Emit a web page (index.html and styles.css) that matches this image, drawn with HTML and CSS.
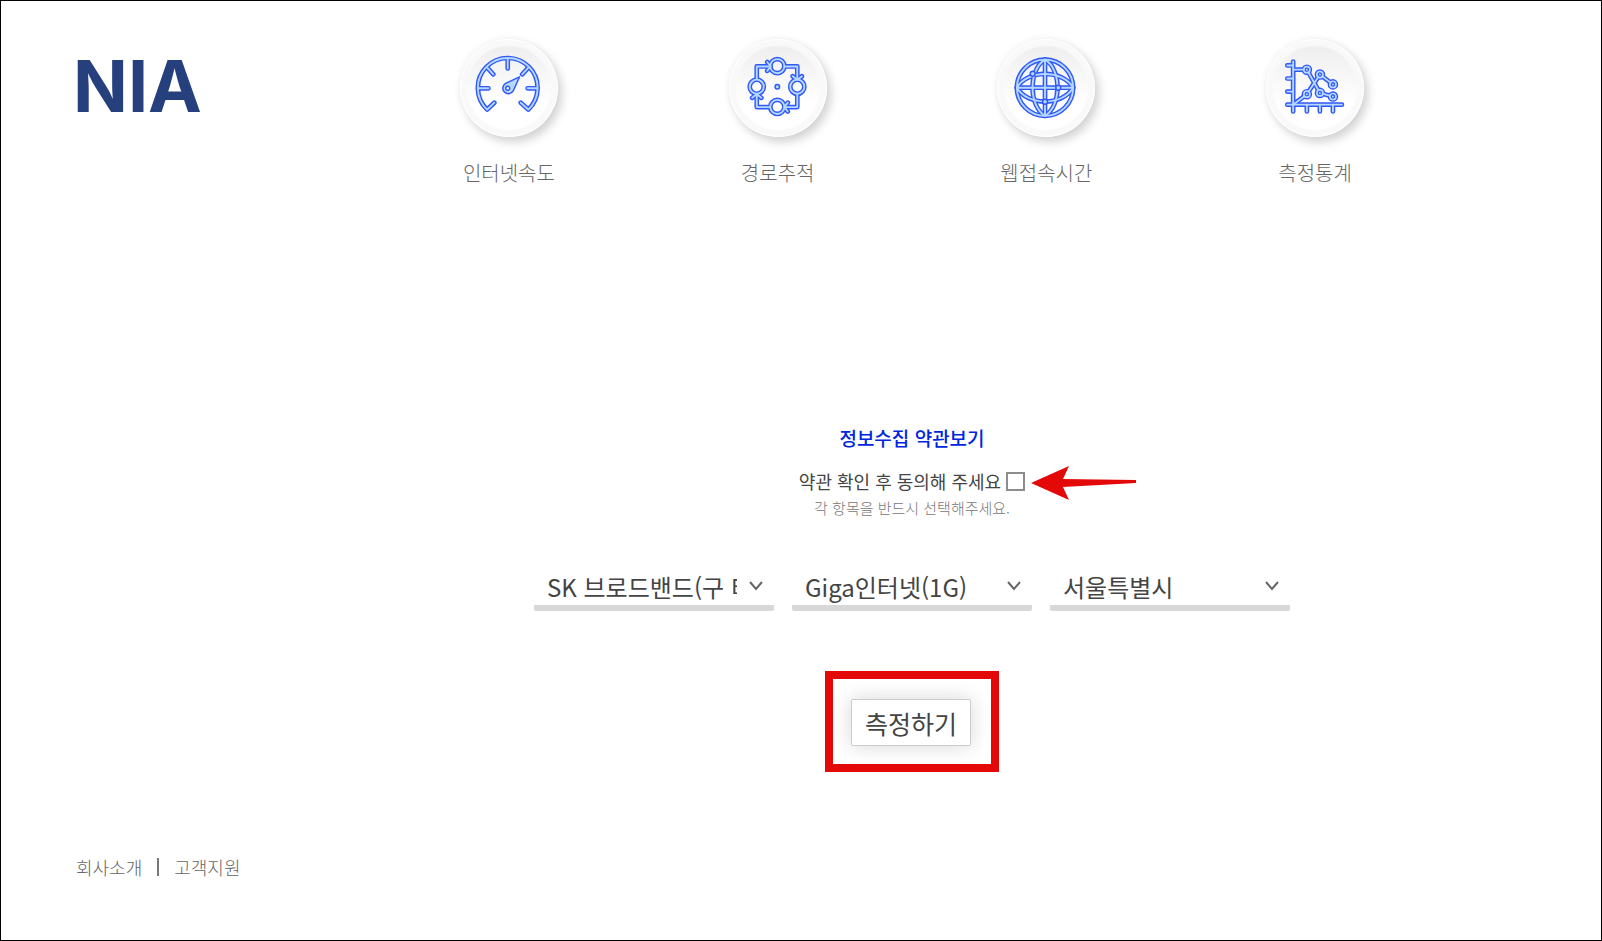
FILE: index.html
```html
<!DOCTYPE html>
<html lang="ko">
<head>
    <meta charset="UTF-8">
    <meta name="viewport" content="width=device-width, initial-scale=1.0">
    <title>NIA</title>
    <link rel="stylesheet" href="styles.css">
</head>
<body>
    <header class="header">
        <a class="logo" href="#">NIA</a>
        <nav class="menu">
            <a class="menu-item" href="#">
                <svg class="menu-icon" viewBox="0 0 98 98" aria-hidden="true">
                    <defs>
                        <g id="speed">
                            <path d="M34 64L26.7 71A30.5 30.5 0 1 1 68.7 71L61 64"/>
                            <path d="M18 49.3H28M77.5 49.3H68M47.7 19.5V29M27 28.5L33 35M68.5 28.5L62.5 35"/>
                        </g>
                    </defs>
                    <use href="#speed" class="edge"/>
                    <use href="#speed" class="core"/>
                    <path class="thin" d="M59.7 37.7L45.5 44.2A5.7 5.7 0 1 0 53.3 52Z"/>
                    <circle class="thin hole" cx="47.7" cy="49.3" r="2"/>
                </svg>
                <span>인터넷속도</span>
            </a>
            <a class="menu-item" href="#">
                <svg class="menu-icon" viewBox="0 0 98 98" aria-hidden="true">
                    <defs>
                        <g id="route">
                            <path d="M27.3 40V27H41M56 27H68.7V40M68.7 56V68.5H56M41 68.5H27.3V56"/>
                            <path d="M38 22.5L41.5 27L38 31.5M64 37L68.7 40.5L73.4 37M59 64L55.5 68.5L59 73M22.6 59L27.3 55.5L32 59"/>
                            <circle cx="48.3" cy="26.7" r="7.2"/>
                            <circle cx="68.7" cy="47.7" r="7.2"/>
                            <circle cx="48.3" cy="68.3" r="7.2"/>
                            <circle cx="27.3" cy="47.7" r="7.2"/>
                        </g>
                    </defs>
                    <use href="#route" class="edge"/>
                    <use href="#route" class="core"/>
                    <circle class="thin" cx="48.3" cy="47.7" r="2.3"/>
                </svg>
                <span>경로추적</span>
            </a>
            <a class="menu-item" href="#">
                <svg class="menu-icon" viewBox="0 0 98 98" aria-hidden="true">
                    <defs>
                        <g id="globe">
                            <circle cx="48" cy="48.7" r="28.7"/>
                            <path d="M48 20V77.4M19.3 48.7H76.7"/>
                            <path d="M48 20C31 30 31 67 48 77.4C65 67 65 30 48 20"/>
                            <path d="M19.3 48.7C30 30 66 30 76.7 48.7C66 67.4 30 67.4 19.3 48.7"/>
                        </g>
                    </defs>
                    <use href="#globe" class="edge"/>
                    <use href="#globe" class="core"/>
                    <circle class="thin" cx="35.4" cy="34.5" r="2.5"/>
                    <circle class="thin" cx="61.5" cy="48.7" r="2.5"/>
                    <circle class="thin" cx="48" cy="63" r="2.5"/>
                </svg>
                <span>웹접속시간</span>
            </a>
            <a class="menu-item" href="#">
                <svg class="menu-icon" viewBox="0 0 98 98" aria-hidden="true">
                    <defs>
                        <g id="stats">
                            <path d="M26.7 22V73M20.7 66H76.5M20.7 26H26.7M20.7 39.3H26.7M20.7 52.7H26.7M40.7 66V73M54 66V73M67.3 66V73"/>
                            <path d="M26.7 30.3H40.7L54 54L67.3 57.7M26.7 66L40.7 55.3L54 35.3L67.3 45.3"/>
                            <circle cx="40.7" cy="30.3" r="3"/>
                            <circle cx="54" cy="35.3" r="3"/>
                            <circle cx="67.3" cy="45.3" r="3"/>
                            <circle cx="40.7" cy="55.3" r="3"/>
                            <circle cx="54" cy="54" r="3"/>
                            <circle cx="67.3" cy="57.7" r="3"/>
                        </g>
                    </defs>
                    <use href="#stats" class="edge"/>
                    <use href="#stats" class="core"/>
                    <g class="dots">
                        <circle cx="40.7" cy="30.3" r="1.6"/>
                        <circle cx="54" cy="35.3" r="1.6"/>
                        <circle cx="67.3" cy="45.3" r="1.6"/>
                        <circle cx="40.7" cy="55.3" r="1.6"/>
                        <circle cx="54" cy="54" r="1.6"/>
                        <circle cx="67.3" cy="57.7" r="1.6"/>
                    </g>
                </svg>
                <span>측정통계</span>
            </a>
        </nav>
    </header>

    <main class="content">
        <a class="terms" href="#">정보수집 약관보기</a>
        <div class="agree">
            <label for="agree">약관 확인 후 동의해 주세요</label>
            <input type="checkbox" id="agree">
            <svg class="arrow" viewBox="0 0 105 34" aria-hidden="true">
                <path d="M0 17L38 0L32 13L105 14V17L32 21L38 34Z"/>
            </svg>
        </div>
        <p class="hint">각 항목을 반드시 선택해주세요.</p>
        <form class="measure">
            <div class="selects">
                <select aria-label="통신사">
                    <option>SK 브로드밴드(구 티브로드)</option>
                </select>
                <select aria-label="상품">
                    <option>Giga인터넷(1G)</option>
                </select>
                <select aria-label="지역">
                    <option>서울특별시</option>
                </select>
            </div>
            <div class="highlight">
                <button type="button">측정하기</button>
            </div>
        </form>
    </main>

    <footer class="footer">
        <a href="#">회사소개</a>
        <span class="bar"></span>
        <a href="#">고객지원</a>
    </footer>
</body>
</html>
```

FILE: styles.css
```css
* {
    box-sizing: border-box;
}

body {
    font-family: "Noto Sans CJK KR", sans-serif;
    font-weight: 400;
    margin: 0;
    min-height: 100vh;
    display: flex;
    flex-direction: column;
    border: 1px solid #000;
    background-color: #fff;
    color: #444;
}

a {
    color: inherit;
    text-decoration: none;
}

.header {
    display: grid;
    grid-template-columns: 222px 1fr;
    padding-top: 38px;
}

.logo {
    padding: 11px 0 0 72px;
    font-family: Inter, sans-serif;
    font-size: 72px;
    font-weight: 700;
    line-height: 72px;
    color: #263f7d;
}

.menu {
    display: grid;
    grid-template-columns: repeat(4, 1fr);
    width: 78%;
    margin: 0 auto;
}

.menu-item {
    display: flex;
    flex-direction: column;
    align-items: center;
    gap: 21px;
    font-size: 20px;
    font-weight: 300;
    line-height: 30px;
    color: #666;
}

.menu-icon {
    width: 98px;
    height: 98px;
    border: 1px solid #fff;
    border-radius: 50%;
    background: radial-gradient(circle at 50% 50%, transparent 41px, #f9f9f9 43px), linear-gradient(#efefef 8%, #fff 65%);
    box-shadow: 4px 5px 10px rgba(0, 0, 0, 0.18), -2px -2px 6px rgba(0, 0, 0, 0.03);
    fill: none;
    stroke-linecap: round;
    stroke-linejoin: round;
}

.edge {
    stroke: #3158fb;
    stroke-width: 4.8;
}

.core {
    stroke: #b5d8ff;
    stroke-width: 1.9;
}

.thin {
    fill: #b5d8ff;
    stroke: #3158fb;
    stroke-width: 1.5;
}

.hole {
    fill: #fff;
}

.dots {
    fill: #b5d8ff;
    stroke: #3158fb;
    stroke-width: 1.2;
}

.content {
    display: flex;
    flex-direction: column;
    align-items: center;
    padding: 236px 0 0 222px;
}

.terms {
    font-size: 19px;
    font-weight: 500;
    line-height: 28px;
    color: #0026e0;
}

.agree {
    position: relative;
    display: flex;
    align-items: center;
    gap: 5px;
    margin-top: 15px;
    font-size: 18px;
    line-height: 28px;
}

.agree input {
    appearance: none;
    width: 19px;
    height: 19px;
    margin: 0;
    border: 2px solid #8d8d8d;
    background-color: #fff;
}

.agree input:checked {
    background-color: #8d8d8d;
}

.arrow {
    position: absolute;
    left: 100%;
    top: -1px;
    width: 105px;
    height: 34px;
    margin-left: 6px;
    fill: #e30909;
}

.hint {
    margin: 2px 0 0;
    font-size: 15px;
    font-weight: 300;
    line-height: 22px;
    color: #777;
}

.measure {
    display: flex;
    flex-direction: column;
    align-items: center;
    gap: 60px;
    margin-top: 48px;
}

.selects {
    display: flex;
    gap: 18px;
}

.selects select {
    appearance: none;
    width: 240px;
    height: 44px;
    padding: 0 37px 0 13px;
    border: none;
    border-bottom: 6px solid #d8d8d8;
    border-radius: 2px;
    background: url("data:image/svg+xml,%3Csvg xmlns='http://www.w3.org/2000/svg' width='14' height='10' fill='none' stroke='%23666' stroke-width='2'%3E%3Cpath d='M1 1l6 7 6-7'/%3E%3C/svg%3E") no-repeat right 11px center;
    font-family: inherit;
    font-size: 24px;
    font-weight: 400;
    color: #444;
}

.highlight {
    padding: 20px 20px 18px 18px;
    border: 8px solid #e30909;
}

.highlight button {
    display: block;
    width: 120px;
    height: 47px;
    padding: 0;
    border: 1px solid #ccc;
    border-radius: 2px;
    background-color: #fff;
    box-shadow: 0 0 20px rgba(0, 0, 0, 0.16);
    font-family: inherit;
    font-size: 25px;
    font-weight: 400;
    color: #444;
}

.footer {
    display: flex;
    align-items: center;
    gap: 15px;
    margin-top: auto;
    padding: 0 0 59px 75px;
    font-size: 18px;
    font-weight: 300;
    line-height: 28px;
    color: #666;
}

.bar {
    width: 2px;
    height: 18px;
    background-color: #777;
}
```
